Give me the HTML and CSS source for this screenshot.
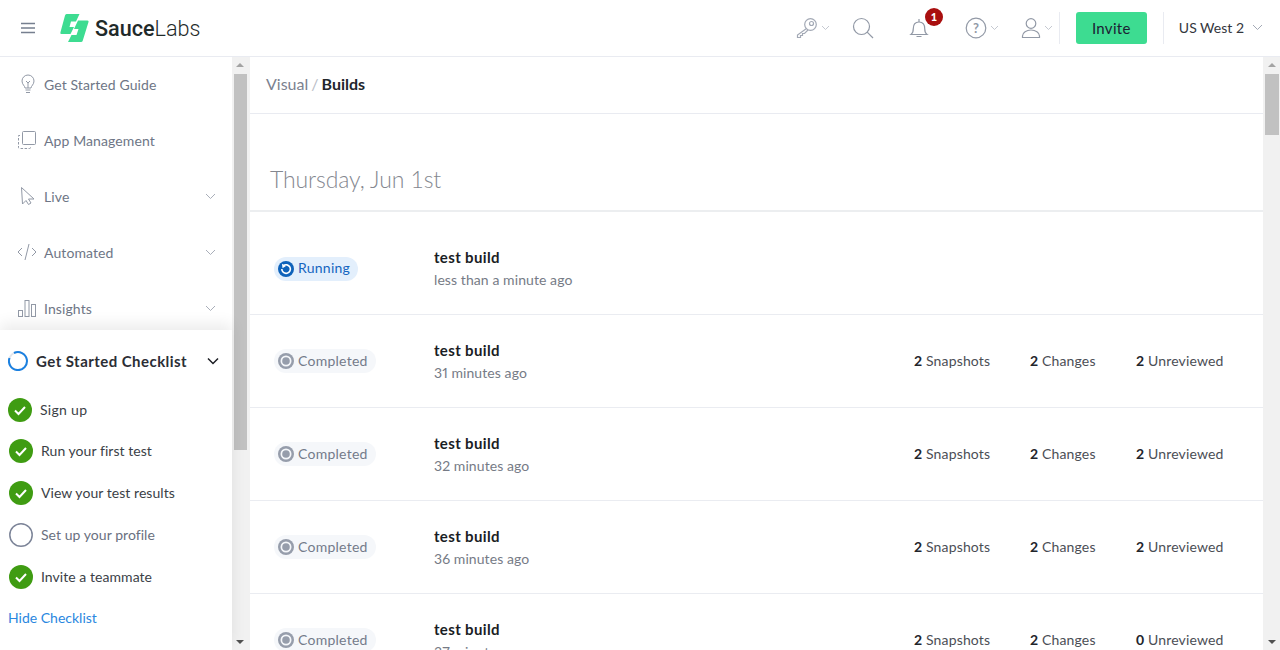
FILE: index.html
```html
<!DOCTYPE html>
<html lang="en">
<head>
    <meta charset="UTF-8">
    <title>Visual Builds</title>
    <link rel="stylesheet" href="styles.css">
</head>
<body>

<div class="topbar">
    <svg class="burger" width="16" height="12" viewBox="0 0 16 12"><path d="M1 1.500h14M1 6h14M1 10.500h14" stroke="#767f8f" stroke-width="1.500" fill="none"/></svg>
    <svg class="logo-mark" width="29" height="28" viewBox="0 0 29 28"><path d="M6.500 0H19.500L16 7.500H11L9.500 13H14L10.500 20H1.500Q0 20 .4 18.500L5 1.500Q5.400 0 6.500 0z" fill="#3ddc91"/><path d="M18 6.500H27.500Q29 6.500 28.500 8L22.800 26.500Q22.400 28 21 28H8L11.500 21H16.500L18.500 15H14z" fill="#3ddc91"/></svg>
    <div class="logo-text"><b>Sauce</b>Labs</div>
    <div class="top-right">
        <div class="top-icon key">
            <svg width="22" height="22" viewBox="0 0 22 22" fill="none" stroke="#a3a9b5" stroke-width="1.200"><circle cx="14.500" cy="7.500" r="5.800"/><circle cx="15.500" cy="6.500" r="2"/><path d="M10.500 11.500 1.500 18v2.500h3v-2h2v-2h2l3.500-3.500"/></svg>
            <svg class="chev" width="9" height="6" viewBox="0 0 9 6"><path d="M1 1l3.500 3.500L8 1" stroke="#c5c9d1" fill="none"/></svg>
        </div>
        <div class="top-icon search">
            <svg width="22" height="22" viewBox="0 0 22 22" fill="none" stroke="#9299a6" stroke-width="1.200"><circle cx="9.500" cy="9.500" r="8"/><path d="M15.200 15.200 21 21"/></svg>
        </div>
        <div class="top-icon bell">
            <svg width="20" height="22" viewBox="0 0 20 22" fill="none" stroke="#9299a6" stroke-width="1.200"><path d="M2 17.500h16c-2-1.500-2.300-3-2.300-6 0-3.500-1.500-6.500-5.700-6.500S4.300 8 4.300 11.500c0 3-.3 4.500-2.300 6z"/><path d="M10 2v3M7.500 19.500h5"/></svg>
            <span class="badge">1</span>
        </div>
        <div class="top-icon help">
            <svg width="22" height="22" viewBox="0 0 22 22" fill="none" stroke="#9299a6" stroke-width="1.200"><circle cx="11" cy="11" r="9.800"/><text x="11" y="15.500" text-anchor="middle" class="help-q">?</text></svg>
            <svg class="chev" width="9" height="6" viewBox="0 0 9 6"><path d="M1 1l3.500 3.500L8 1" stroke="#c5c9d1" fill="none"/></svg>
        </div>
        <div class="top-icon user">
            <svg width="20" height="22" viewBox="0 0 20 22" fill="none" stroke="#9299a6" stroke-width="1.200"><circle cx="10" cy="6.500" r="4.800"/><path d="M1.500 20.500v-1.500c0-3.500 4-6 8.500-6s8.500 2.500 8.500 6v1.500z"/></svg>
            <svg class="chev" width="9" height="6" viewBox="0 0 9 6"><path d="M1 1l3.500 3.500L8 1" stroke="#c5c9d1" fill="none"/></svg>
        </div>
        <div class="top-sep"></div>
        <a class="invite">Invite</a>
        <div class="top-sep"></div>
        <div class="region">US West 2
            <svg width="11" height="7" viewBox="0 0 11 7"><path d="M1 1l4.500 4.500L10 1" stroke="#a3a9b5" fill="none"/></svg>
        </div>
    </div>
</div>

<div class="layout">
    <div class="sidebar">
        <div class="side-inner">
            <div class="side-nav">
                <div class="nav-item">
                    <svg width="16" height="20" viewBox="0 0 16 20" fill="none" stroke="#9299a6"><path d="M5 14c0-2-3-3.500-3-7a6 6 0 0 1 12 0c0 3.500-3 5-3 7z"/><path d="M5.500 16h5M6 18.500h4M6 7l2 2 2-2M8 9v5"/></svg>
                    <span>Get Started Guide</span>
                </div>
                <div class="nav-item">
                    <svg width="20" height="20" viewBox="1 0 20 20" fill="none" stroke="#9299a6"><rect x="5.500" y="1.500" width="13" height="13" rx="1"/><path d="M3 5.500H1.500v12a1 1 0 0 0 1 1h10a1 1 0 0 0 1-1V16.500" stroke-dasharray="2.500 1.500"/></svg>
                    <span>App Management</span>
                </div>
                <div class="nav-item">
                    <svg width="18" height="20" viewBox="0 0 18 20" fill="none" stroke="#9299a6"><path d="M2.500 1.500 3.500 18l3.500-3.500 2.500 4 2.500-1.500-2.500-4H15z"/></svg>
                    <span>Live</span>
                    <svg class="nav-chev" width="11" height="7" viewBox="0 0 11 7"><path d="M1 1l4.500 4.500L10 1" stroke="#a9aeb9" fill="none"/></svg>
                </div>
                <div class="nav-item">
                    <svg width="20" height="20" viewBox="1 0 20 20" fill="none" stroke="#9299a6"><path d="M5 6 1 10l4 4M15 6l4 4-4 4M12 2 8 18"/></svg>
                    <span>Automated</span>
                    <svg class="nav-chev" width="11" height="7" viewBox="0 0 11 7"><path d="M1 1l4.500 4.500L10 1" stroke="#a9aeb9" fill="none"/></svg>
                </div>
                <div class="nav-item">
                    <svg width="20" height="20" viewBox="1 0 20 20" fill="none" stroke="#9299a6"><rect x="1.500" y="12.500" width="4" height="6"/><rect x="8" y="2.500" width="4" height="16"/><rect x="14.500" y="6.500" width="4" height="12"/></svg>
                    <span>Insights</span>
                    <svg class="nav-chev" width="11" height="7" viewBox="0 0 11 7"><path d="M1 1l4.500 4.500L10 1" stroke="#a9aeb9" fill="none"/></svg>
                </div>
            </div>
            <div class="checklist">
                <div class="check-head">
                    <svg width="20" height="20" viewBox="0 0 20 20" fill="none" stroke-width="2"><circle cx="10" cy="10" r="9" stroke="#e3e6ec"/><path d="M6 2A9 9 0 1 1 1.500 7" stroke="#1b80e0"/></svg>
                    <span>Get Started Checklist</span>
                    <svg class="head-chev" width="12" height="8" viewBox="0 0 12 8"><path d="M1 1.500l5 5 5-5" stroke="#1c1e24" stroke-width="1.500" fill="none"/></svg>
                </div>
                <div class="check-row first">
                    <svg class="tick" width="24" height="24" viewBox="0 0 24 24"><circle cx="12" cy="12" r="12" fill="#3f9c12"/><path d="M7 12.500l3.500 3.500 6.500-7" stroke="#fff" stroke-width="2" fill="none"/></svg>
                    <span>Sign up</span>
                </div>
                <div class="check-row">
                    <svg class="tick" width="24" height="24" viewBox="0 0 24 24"><circle cx="12" cy="12" r="12" fill="#3f9c12"/><path d="M7 12.500l3.500 3.500 6.500-7" stroke="#fff" stroke-width="2" fill="none"/></svg>
                    <span>Run your first test</span>
                </div>
                <div class="check-row">
                    <svg class="tick" width="24" height="24" viewBox="0 0 24 24"><circle cx="12" cy="12" r="12" fill="#3f9c12"/><path d="M7 12.500l3.500 3.500 6.500-7" stroke="#fff" stroke-width="2" fill="none"/></svg>
                    <span>View your test results</span>
                </div>
                <div class="check-row todo">
                    <svg class="tick" width="24" height="24" viewBox="0 0 24 24"><circle cx="12" cy="12" r="11.200" fill="none" stroke="#7c8498" stroke-width="1.500"/></svg>
                    <span>Set up your profile</span>
                </div>
                <div class="check-row">
                    <svg class="tick" width="24" height="24" viewBox="0 0 24 24"><circle cx="12" cy="12" r="12" fill="#3f9c12"/><path d="M7 12.500l3.500 3.500 6.500-7" stroke="#fff" stroke-width="2" fill="none"/></svg>
                    <span>Invite a teammate</span>
                </div>
                <a class="hide-link">Hide Checklist</a>
            </div>
        </div>
        <div class="scrollbar side-bar">
            <i class="arrow up"></i>
            <div class="track"><div class="thumb"></div></div>
            <i class="arrow down"></i>
        </div>
    </div>

    <div class="main">
        <div class="content">
            <div class="crumbs"><span class="crumb-a">Visual</span><span class="crumb-sep">/</span><b>Builds</b></div>
            <h2 class="date">Thursday, Jun 1st</h2>

            <div class="build first">
                <div class="status"><span class="pill running">
                    <svg width="16" height="16" viewBox="0 0 16 16"><circle cx="8" cy="8" r="8" fill="#0e62ba"/><path d="M5.300 4.800A4.300 4.300 0 1 1 3.800 8" stroke="#fff" stroke-width="1.600" fill="none"/><path d="M4 2.800 8 5 4.500 7.200z" fill="#fff"/></svg>
                    Running</span></div>
                <div class="info"><div class="name">test build</div><div class="time">less than a minute ago</div></div>
            </div>

            <div class="build">
                <div class="status"><span class="pill">
                    <svg width="16" height="16" viewBox="0 0 16 16"><circle cx="8" cy="8" r="8" fill="#969dab"/><circle cx="8" cy="8" r="5.500" fill="#f5f7fa"/><circle cx="8" cy="8" r="3.800" fill="#969dab"/></svg>
                    Completed</span></div>
                <div class="info"><div class="name">test build</div><div class="time">31 minutes ago</div></div>
                <div class="stats"><span class="s1"><b>2</b> Snapshots</span><span class="s2"><b>2</b> Changes</span><span class="s3"><b>2</b> Unreviewed</span></div>
            </div>

            <div class="build">
                <div class="status"><span class="pill">
                    <svg width="16" height="16" viewBox="0 0 16 16"><circle cx="8" cy="8" r="8" fill="#969dab"/><circle cx="8" cy="8" r="5.500" fill="#f5f7fa"/><circle cx="8" cy="8" r="3.800" fill="#969dab"/></svg>
                    Completed</span></div>
                <div class="info"><div class="name">test build</div><div class="time">32 minutes ago</div></div>
                <div class="stats"><span class="s1"><b>2</b> Snapshots</span><span class="s2"><b>2</b> Changes</span><span class="s3"><b>2</b> Unreviewed</span></div>
            </div>

            <div class="build">
                <div class="status"><span class="pill">
                    <svg width="16" height="16" viewBox="0 0 16 16"><circle cx="8" cy="8" r="8" fill="#969dab"/><circle cx="8" cy="8" r="5.500" fill="#f5f7fa"/><circle cx="8" cy="8" r="3.800" fill="#969dab"/></svg>
                    Completed</span></div>
                <div class="info"><div class="name">test build</div><div class="time">36 minutes ago</div></div>
                <div class="stats"><span class="s1"><b>2</b> Snapshots</span><span class="s2"><b>2</b> Changes</span><span class="s3"><b>2</b> Unreviewed</span></div>
            </div>

            <div class="build">
                <div class="status"><span class="pill">
                    <svg width="16" height="16" viewBox="0 0 16 16"><circle cx="8" cy="8" r="8" fill="#969dab"/><circle cx="8" cy="8" r="5.500" fill="#f5f7fa"/><circle cx="8" cy="8" r="3.800" fill="#969dab"/></svg>
                    Completed</span></div>
                <div class="info"><div class="name">test build</div><div class="time">37 minutes ago</div></div>
                <div class="stats"><span class="s1"><b>2</b> Snapshots</span><span class="s2"><b>2</b> Changes</span><span class="s3"><b>0</b> Unreviewed</span></div>
            </div>
        </div>
        <div class="scrollbar main-bar">
            <i class="arrow up"></i>
            <div class="track"><div class="thumb"></div></div>
            <i class="arrow down"></i>
        </div>
    </div>
</div>

</body>
</html>
```

FILE: styles.css
```css
* { margin: 0; padding: 0; box-sizing: border-box; }
html, body { height: 100%; width: 100%; }
body {
    overflow: hidden;
    display: flex;
    flex-direction: column;
    background: #fff;
    font-family: 'Lato', 'Liberation Sans', sans-serif;
    font-size: 14px;
    color: #22252c;
}

/* top bar */
.topbar {
    flex: 0 0 57px;
    display: flex;
    align-items: center;
    border-bottom: 1px solid #e9ebf1;
    padding-left: 20px;
}
.burger { margin-right: 24px; }
.logo-mark { margin-right: 6px; }
.logo-text {
    font-family: 'Roboto', sans-serif;
    font-size: 21.600px;
    font-weight: 300;
    color: #1f2a2a;
}
.logo-text b { font-weight: 500; }
.top-right {
    margin-left: auto;
    display: flex;
    align-items: center;
    height: 100%;
}
.top-icon {
    position: relative;
    display: flex;
    align-items: center;
    gap: 3px;
}
.top-icon.key { margin-right: 22px; }
.top-icon.search { margin-right: 35px; }
.top-icon.bell { margin-right: 36px; }
.top-icon.help { margin-right: 22px; }
.top-icon.user { margin-right: 6px; }
.help-q {
    font-family: 'Lato', sans-serif;
    font-size: 13px;
    font-weight: 700;
    fill: #9299a6;
    stroke: none;
}
.badge {
    position: absolute;
    top: -9px;
    left: 16px;
    width: 18px;
    height: 18px;
    border-radius: 50%;
    background: #a90f0f;
    color: #fff;
    font-size: 11px;
    font-weight: 900;
    text-align: center;
    line-height: 18px;
}
.top-sep {
    width: 1px;
    height: 32px;
    background: #e9ebf1;
}
.invite {
    width: 71px;
    height: 32px;
    margin: 0 16px;
    border-radius: 3px;
    background: #3ddc91;
    color: #1c2133;
    font-size: 15px;
    line-height: 32px;
    text-align: center;
    letter-spacing: .3px;
}
.region {
    display: flex;
    align-items: center;
    gap: 8px;
    padding: 0 17px 2px 15px;
    font-size: 14px;
    color: #33363d;
}

/* page body */
.layout {
    flex: 1;
    display: flex;
    min-height: 0;
}
.sidebar {
    flex: 0 0 250px;
    display: flex;
}
.side-inner {
    width: 232px;
    display: flex;
    flex-direction: column;
}
.side-nav {
    flex: 0 0 273px;
    overflow: hidden;
}
.nav-item {
    height: 56px;
    padding: 0 16px 2px 18px;
    display: flex;
    align-items: center;
    color: #6e7686;
    font-size: 14px;
    letter-spacing: .1px;
}
.nav-item > svg:first-child { flex: 0 0 20px; margin-right: 6px; }
.nav-chev { margin-left: auto; }

.checklist {
    flex: 1;
    position: relative;
    padding: 0 8px;
    background: #fff;
    box-shadow: 0 -6px 14px rgba(0, 0, 0, .08);
}
.check-head {
    height: 62px;
    display: flex;
    align-items: center;
    font-size: 15px;
    font-weight: 700;
    color: #2b2e35;
    letter-spacing: .45px;
}
.check-head span { margin-left: 8px; }
.head-chev { margin-left: auto; margin-right: 5px; }
.check-row {
    height: 42px;
    display: flex;
    align-items: center;
    gap: 8px;
    padding-left: 1px;
    color: #3b3f47;
    letter-spacing: .05px;
}
.check-row span { padding-bottom: 2px; }
.check-row.first { height: 38px; padding: 0 0 2px; letter-spacing: .3px; }
.check-row.todo { color: #6a7080; }
.hide-link {
    display: block;
    margin-top: 11px;
    color: #2a87e0;
}

/* fake scrollbars, the shot has classic chrome ones */
.scrollbar {
    display: flex;
    flex-direction: column;
    background: #f1f1f1;
}
.side-bar { flex: 0 0 18px; }
.main-bar { flex: 0 0 17px; }
.track { flex: 1; }
.side-bar .track { padding: 0 3px 0 2px; }
.main-bar .track { padding: 0 1px 0 2px; }
.thumb {
    background: #c1c1c1;
}
.side-bar .thumb { height: 376px; }
.main-bar .thumb { height: 61px; }
.arrow {
    flex: 0 0 17px;
    display: block;
    position: relative;
}
.arrow::after {
    content: '';
    position: absolute;
    left: 4px;
    border-left: 4px solid transparent;
    border-right: 4px solid transparent;
}
.main-bar .arrow::after { left: 5px; }
.arrow.up::after { top: 6px; border-bottom: 4px solid #a3a3a3; }
.arrow.down::after { top: 7px; border-top: 4px solid #505050; }

/* builds list */
.main {
    flex: 1;
    display: flex;
    min-width: 0;
}
.content {
    flex: 1;
    min-width: 0;
    overflow: hidden;
}
.crumbs {
    height: 57px;
    display: flex;
    align-items: center;
    padding: 0 0 3px 16px;
    border-bottom: 1px solid #e9ebf1;
    font-size: 16px;
    color: #7c8290;
}
.crumb-sep { margin: 0 3px; color: #b9bdc6; }
.crumbs b { font-weight: 700; color: #22252c; }
.date {
    height: 98px;
    padding: 50px 0 0 20px;
    border-bottom: 2px solid #eceef0;
    font-size: 23px;
    line-height: 30px;
    font-weight: 300;
    color: #84878f;
    letter-spacing: -.1px;
}
.build {
    height: 93px;
    display: flex;
    align-items: center;
    padding-left: 24px;
    border-bottom: 1px solid #eaecf1;
}
.build.first { height: 103px; padding-top: 9px; }
.build.first .status { padding-top: 2px; }
.status { flex: 0 0 160px; }
.pill {
    display: inline-flex;
    align-items: center;
    gap: 4px;
    height: 24px;
    padding: 0 8px 2px 4px;
    border-radius: 12px;
    background: #f5f7fa;
    color: #747b8a;
    font-size: 14px;
    letter-spacing: .25px;
}
.pill svg { margin-top: 2px; }
.pill.running { background: #e3effc; color: #1565c0; }
.name {
    font-size: 15px;
    font-weight: 700;
    line-height: 18px;
    color: #1a1d24;
    letter-spacing: .35px;
}
.time {
    margin-top: 5px;
    font-size: 14px;
    line-height: 17px;
    color: #767b86;
    letter-spacing: .08px;
    font-variant-numeric: proportional-nums;
}
.stats {
    margin-left: auto;
    padding: 0 40px 2px 0;
    display: flex;
    font-size: 14px;
    color: #4b4e55;
    letter-spacing: .15px;
}
.stats b { font-weight: 700; color: #22252c; }
.s1 { width: 116px; }
.s2 { width: 106px; }
.s3 { width: 87px; white-space: nowrap; }
```
